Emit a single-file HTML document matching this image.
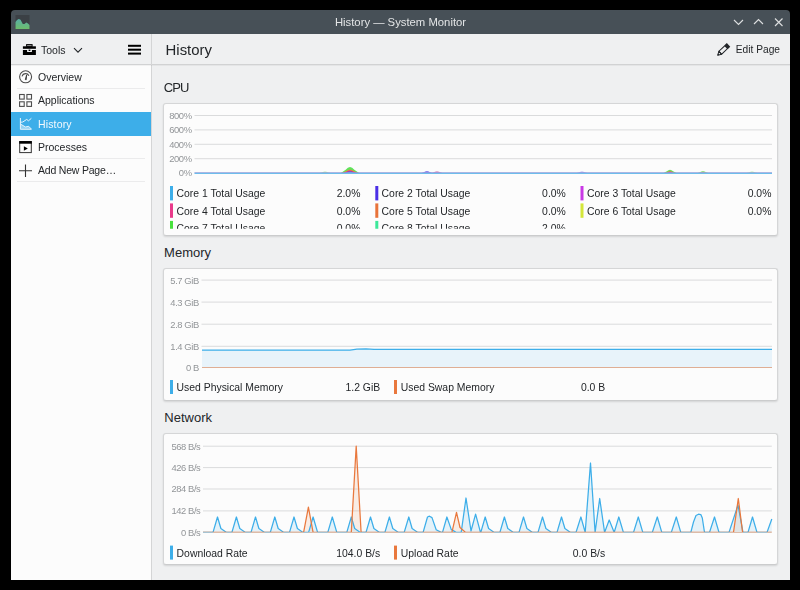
<!DOCTYPE html>
<html><head><meta charset="utf-8">
<style>
*{margin:0;padding:0;box-sizing:border-box}
html,body{width:800px;height:590px;overflow:hidden;background:#000}
body{font-family:"Liberation Sans",sans-serif;color:#232629;position:relative}
.a{position:absolute;white-space:nowrap}
.t{font-size:10.5px;line-height:10.5px}
svg{position:absolute;overflow:visible}
</style></head><body>
<!-- window frame -->
<div class="a" style="left:11px;top:10px;width:779px;height:24px;background:#475057;border-radius:4px 4px 0 0"></div>
<div class="a" style="left:11px;top:34px;width:779px;height:30px;background:#eff0f1"></div>
<div class="a" style="left:11px;top:64px;width:779px;height:1px;background:#d1d2d3"></div>
<div class="a" style="left:11px;top:65px;width:140px;height:515px;background:#fcfcfc"></div>
<div class="a" style="left:152px;top:65px;width:638px;height:515px;background:#eff0f1"></div>
<div class="a" style="left:151px;top:34px;width:1px;height:546px;background:#d4d5d6"></div>
<div class="a" style="left:11px;top:65px;width:779px;height:1px;background:rgba(0,0,0,0.045)"></div>

<!-- title bar -->
<svg style="left:0;top:0" width="800" height="40">
 <rect x="15.5" y="15" width="14" height="14" fill="#3b4045"/>
 <defs><linearGradient id="ig" x1="0" y1="0" x2="0" y2="1"><stop offset="0" stop-color="#58aea6"/><stop offset="1" stop-color="#6cbd6c"/></linearGradient></defs>
 <path d="M15.5 22 L17 20 L18.8 19.1 L20.5 19.8 L22.8 23.9 L24.5 24 L26.2 22.5 L28 23.5 L29.5 24.9 L29.5 29 L15.5 29 Z" fill="url(#ig)"/>
 <g stroke="#dcdedf" stroke-width="1.15" fill="none">
  <path d="M734 20 L738.5 24.5 L743 20"/>
  <path d="M754 24 L758.5 19.5 L763 24"/>
  <path d="M775 18.5 L782.5 26 M782.5 18.5 L775 26"/>
 </g>
</svg>
<div class="a" style="left:11px;width:779px;top:16.5px;text-align:center;font-size:11.3px;line-height:11.3px;color:#e3e5e6;will-change:transform">History — System Monitor</div>

<!-- sidebar header -->
<svg style="left:0;top:0" width="160" height="64">
 <rect x="26.1" y="44.1" width="6.5" height="2.8" fill="#000"/>
 <rect x="27.1" y="45" width="4.5" height="1.2" fill="#888"/>
 <rect x="22.9" y="46.3" width="13" height="2.5" fill="#000"/>
 <rect x="22.9" y="50" width="13" height="5" fill="#000"/>
 <rect x="27.1" y="49" width="4.8" height="3" fill="#eff0f1"/>
 <rect x="28.6" y="49.6" width="1.8" height="1.4" fill="#000"/>
 <path d="M74 48.2 L78 52.2 L82 48.2" stroke="#232629" stroke-width="1.1" fill="none"/>
 <rect x="128" y="44.8" width="13" height="2" fill="#000"/>
 <rect x="128" y="48.7" width="13" height="2" fill="#000"/>
 <rect x="128" y="52.6" width="13" height="2" fill="#000"/>
</svg>
<div class="a t" style="left:41px;top:45.1px">Tools</div>

<!-- content header -->
<div class="a" style="left:165.6px;top:43.3px;font-size:14.9px;line-height:14.9px">History</div>
<svg style="left:0;top:0" width="800" height="64">
 <g transform="translate(717.5 55.4) rotate(-43.5)">
  <path d="M0.3 0 L3.8 -2 L3.8 2 Z" fill="none" stroke="#232629" stroke-width="1" stroke-linejoin="round"/>
  <path d="M0 0 L1.8 -1 L1.8 1 Z" fill="#232629"/>
  <rect x="3.8" y="-2" width="8.2" height="4" fill="none" stroke="#232629" stroke-width="1"/>
  <rect x="12" y="-2.5" width="3.2" height="5" fill="#232629"/>
 </g>
</svg>
<div class="a" style="left:735.8px;top:45.3px;font-size:10.2px;line-height:10.2px">Edit Page</div>

<!-- sidebar items -->
<div class="a" style="left:11px;top:112px;width:140px;height:24px;background:#3daee9"></div>
<div class="a" style="left:17px;top:88px;width:128px;height:1px;background:#ebebec"></div>
<div class="a" style="left:17px;top:158px;width:128px;height:1px;background:#ebebec"></div>
<div class="a" style="left:17px;top:181px;width:128px;height:1px;background:#ebebec"></div>
<svg style="left:0;top:0" width="160" height="190">
 <g fill="none" stroke="#4d4d4d" stroke-width="1.1">
  <circle cx="25.6" cy="76.8" r="6"/>
  <path d="M22 76.3 A3.7 3.7 0 0 1 28.9 75.8"/>
 </g>
 <path d="M25.3 79.6 L26.6 75 L26.2 79.8 Z" fill="#333" stroke="#333" stroke-width="0.8"/>
 <g fill="none" stroke="#4d4d4d" stroke-width="1.1">
  <rect x="19.6" y="94.5" width="4.6" height="4.6"/>
  <rect x="26.9" y="94.5" width="4.6" height="4.6"/>
  <rect x="19.6" y="101.8" width="4.6" height="4.6"/>
  <rect x="26.9" y="101.8" width="4.6" height="4.6"/>
 </g>
 <g fill="none" stroke="#e6f4fc" stroke-width="1">
  <path d="M20.4 118 L20.4 129.3 L31.6 129.3"/>
  <path d="M20.4 122.3 L22.8 122 L26.7 119.4 L28.5 120.8 L31.4 118.3"/>
  <path d="M20.4 124 L25.5 127 L28.7 126.3 L31.3 129"/>
 </g>
 <path d="M20.4 124 L25.5 127 L28.7 126.3 L31.3 129 L20.4 129 Z" fill="#e6f4fc" opacity="0.5"/>
 <rect x="19.7" y="141.6" width="11.6" height="11" fill="none" stroke="#333" stroke-width="1"/>
 <rect x="19.2" y="141.1" width="12.6" height="2.6" fill="#000"/>
 <path d="M23.9 146.2 L27.8 148.45 L23.9 150.7 Z" fill="#000"/>
 <path d="M19 170.8 L32 170.8 M25.5 164.5 L25.5 177" stroke="#333" stroke-width="1.1"/>
</svg>
<div class="a t" style="left:38px;top:72.2px">Overview</div>
<div class="a t" style="left:38px;top:95.1px">Applications</div>
<div class="a t" style="left:38px;top:119.1px;color:#f4f9fd;letter-spacing:0.15px">History</div>
<div class="a t" style="left:38px;top:142px">Processes</div>
<div class="a t" style="left:38px;top:165px;letter-spacing:-0.2px">Add New Page…</div>

<!-- section titles -->
<div class="a" style="left:163.7px;top:81px;font-size:13px;line-height:13px;letter-spacing:-0.9px">CPU</div>
<div class="a" style="left:164.1px;top:245.8px;font-size:13px;line-height:13px">Memory</div>
<div class="a" style="left:164.3px;top:411.2px;font-size:13px;line-height:13px">Network</div>

<!-- cards -->
<div class="a" style="left:163px;top:103px;width:615px;height:133px;background:#fcfcfc;border:1px solid #d5d6d7;border-bottom-color:#cbcccd;border-radius:3px;box-shadow:0 1px 2px rgba(0,0,0,0.12)"></div>
<div class="a" style="left:163px;top:268px;width:615px;height:133px;background:#fcfcfc;border:1px solid #d5d6d7;border-bottom-color:#cbcccd;border-radius:3px;box-shadow:0 1px 2px rgba(0,0,0,0.12)"></div>
<div class="a" style="left:163px;top:433px;width:615px;height:132px;background:#fcfcfc;border:1px solid #d5d6d7;border-bottom-color:#cbcccd;border-radius:3px;box-shadow:0 1px 2px rgba(0,0,0,0.12)"></div>

<svg style="left:0;top:0" width="800" height="590" font-family="Liberation Sans, sans-serif">
 <defs><clipPath id="netclip"><rect x="200" y="440" width="580" height="92"/></clipPath><clipPath id="memclip"><rect x="200" y="270" width="580" height="97.8"/></clipPath><clipPath id="cpuclip"><rect x="165" y="104" width="612" height="124.8"/></clipPath></defs>
 <!-- CPU chart -->
 <g stroke="#dadbdc" stroke-width="1">
  <path d="M194.5 115.5 H772 M194.5 129.9 H772 M194.5 144.3 H772 M194.5 158.7 H772 M194.5 173 H772"/>
 </g>
 <g font-size="9.4" fill="#929598" text-anchor="end" letter-spacing="-0.4">
  <text x="191.6" y="118.8">800%</text>
  <text x="191.6" y="133.2">600%</text>
  <text x="191.6" y="147.6">400%</text>
  <text x="191.6" y="162">200%</text>
  <text x="191.6" y="176.3">0%</text>
 </g>
 <path d="M340.5 173.2 L345.7 169.7 Q350.0 164.1 354.3 169.7 L359.5 173.2 Z" fill="#5ee35a"/>
 <path d="M341.3 173.2 L346.1 171.1 Q350.0 167.7 353.9 171.1 L358.7 173.2 Z" fill="#e88a3c"/>
 <path d="M342.0 173.2 L346.4 171.8 Q350.0 169.4 353.6 171.8 L358.0 173.2 Z" fill="#e0407a"/>
 <path d="M342.8 173.2 L346.8 172.1 Q350.0 170.3 353.2 172.1 L357.2 173.2 Z" fill="#7a3ee6"/>
 <path d="M344.0 173.2 L347.3 172.4 Q350.0 171.0 352.7 172.4 L356.0 173.2 Z" fill="#3da8e9"/>
 <path d="M663.0 173.2 L666.9 171.3 Q670.0 168.3 673.1 171.3 L677.0 173.2 Z" fill="#6ae35a" opacity="1.00"/>
 <path d="M664.0 173.2 L667.3 172.0 Q670.0 170.0 672.7 172.0 L676.0 173.2 Z" fill="#e88a3c" opacity="0.80"/>
 <path d="M665.0 173.2 L667.8 172.3 Q670.0 170.9 672.2 172.3 L675.0 173.2 Z" fill="#c040c0" opacity="0.80"/>
 <path d="M697.0 173.2 L700.3 171.9 Q703.0 169.9 705.7 171.9 L709.0 173.2 Z" fill="#7ae36a" opacity="0.80"/>
 <path d="M698.0 173.2 L700.8 172.4 Q703.0 171.2 705.2 172.4 L708.0 173.2 Z" fill="#e0808a" opacity="0.60"/>
 <path d="M421.0 173.2 L424.3 172.0 Q427.0 170.0 429.7 172.0 L433.0 173.2 Z" fill="#5a4ae6" opacity="0.70"/>
 <path d="M431.0 173.2 L434.3 172.1 Q437.0 170.3 439.7 172.1 L443.0 173.2 Z" fill="#c04aa0" opacity="0.60"/>
 <path d="M319.0 173.2 L322.3 172.3 Q325.0 170.9 327.7 172.3 L331.0 173.2 Z" fill="#8ae07a" opacity="0.60"/>
 <path d="M576.0 173.2 L579.3 172.3 Q582.0 170.7 584.7 172.3 L588.0 173.2 Z" fill="#6a5ae6" opacity="0.50"/>
 <path d="M746.0 173.2 L749.3 172.2 Q752.0 170.6 754.7 172.2 L758.0 173.2 Z" fill="#8ae07a" opacity="0.60"/>
 <path d="M194.5 172.5 H772" stroke="#a890d8" stroke-width="1" opacity="0.6"/>
 <path d="M194.5 173.4 H772" stroke="#6dbcec" stroke-width="1.2"/>
 <g clip-path="url(#cpuclip)">
  <rect x="170" y="186" width="3" height="14.4" fill="#3daee9"/>
  <rect x="170" y="203.4" width="3" height="14.4" fill="#e93a8a"/>
  <rect x="170" y="220.9" width="3" height="14.4" fill="#47e03c"/>
  <rect x="375.3" y="186" width="3" height="14.4" fill="#4b2fe6"/>
  <rect x="375.3" y="203.4" width="3" height="14.4" fill="#e8733a"/>
  <rect x="375.3" y="220.9" width="3" height="14.4" fill="#3de89a"/>
  <rect x="580.5" y="186" width="3" height="14.4" fill="#c93ae6"/>
  <rect x="580.5" y="203.4" width="3" height="14.4" fill="#d4e63a"/>
  <g font-size="10.4" fill="#232629">
   <text x="176.5" y="197.4">Core 1 Total Usage</text>
   <text x="176.5" y="214.9">Core 4 Total Usage</text>
   <text x="176.5" y="232.4">Core 7 Total Usage</text>
   <text x="381.6" y="197.4">Core 2 Total Usage</text>
   <text x="381.6" y="214.9">Core 5 Total Usage</text>
   <text x="381.6" y="232.4">Core 8 Total Usage</text>
   <text x="587" y="197.4">Core 3 Total Usage</text>
   <text x="587" y="214.9">Core 6 Total Usage</text>
  </g>
  <g font-size="10.4" fill="#232629" text-anchor="end">
   <text x="360.4" y="197.4">2.0%</text>
   <text x="360.4" y="214.9">0.0%</text>
   <text x="360.4" y="232.4">0.0%</text>
   <text x="565.8" y="197.4">0.0%</text>
   <text x="565.8" y="214.9">0.0%</text>
   <text x="565.8" y="232.4">2.0%</text>
   <text x="771.4" y="197.4">0.0%</text>
   <text x="771.4" y="214.9">0.0%</text>
  </g>
 </g>

 <!-- Memory chart -->
 <g stroke="#dadbdc" stroke-width="1">
  <path d="M201.5 280.1 H772 M201.5 302.1 H772 M201.5 324.2 H772 M201.5 346.3 H772"/>
 </g>
 <g font-size="9.4" fill="#929598" text-anchor="end" letter-spacing="-0.4">
  <text x="198.8" y="283.5">5.7 GiB</text>
  <text x="198.8" y="305.5">4.3 GiB</text>
  <text x="198.8" y="327.6">2.8 GiB</text>
  <text x="198.8" y="349.7">1.4 GiB</text>
  <text x="198.8" y="370.8">0 B</text>
 </g>
 <path d="M202 350.2 L350 350.2 L357 349.2 L366 348.9 L374 349.3 L772 349.4 L772 367.2 L202 367.2 Z" fill="#e8f3fa"/>
 <path d="M202 367.5 H772" stroke="#dfae94" stroke-width="1"/>
 <path d="M202 350.2 L350 350.2 L357 349.2 L366 348.9 L374 349.3 L772 349.4" stroke="#3daee9" stroke-width="1.2" fill="none"/>
 <rect x="170" y="380" width="3" height="14" fill="#3daee9"/>
 <rect x="394" y="380" width="3" height="14" fill="#e9783d"/>
 <g font-size="10.4" fill="#232629">
  <text x="176.6" y="391.1">Used Physical Memory</text>
  <text x="400.8" y="391.1">Used Swap Memory</text>
  <text x="380.2" y="391.1" text-anchor="end">1.2 GiB</text>
  <text x="605.2" y="391.1" text-anchor="end">0.0 B</text>
 </g>

 <!-- Network chart -->
 <g stroke="#dadbdc" stroke-width="1">
  <path d="M203 446.2 H771.8 M203 467.6 H771.8 M203 489 H771.8 M203 510.9 H771.8"/>
 </g>
 <g font-size="9.4" fill="#929598" text-anchor="end" letter-spacing="-0.4">
  <text x="200.4" y="449.6">568 B/s</text>
  <text x="200.4" y="471">426 B/s</text>
  <text x="200.4" y="492.4">284 B/s</text>
  <text x="200.4" y="514.1">142 B/s</text>
  <text x="200.4" y="535.8">0 B/s</text>
 </g>
 <g clip-path="url(#netclip)">
 <path d="M203.0 532.4 L303.6 532.4 L308.4 507.2 L313.1 532.4 L351.3 532.4 L356.2 446.1 L361.1 532.4 L451.9 532.4 L456.5 512.3 L460.0 527.5 L465.6 532.4 L733.5 532.4 L738.3 498.5 L742.6 532.4 L771.8 532.4 Z" fill="#e9783d" fill-opacity="0.12"/>
 <path d="M203.0 532.4 L213.0 532.4 L217.5 517.0 L220.9 528.5 L226.5 532.4 L231.9 532.4 L236.4 517.0 L239.8 528.5 L245.4 532.4 L251.0 532.4 L255.5 517.0 L258.9 528.5 L264.5 532.4 L270.3 532.4 L274.8 517.0 L278.2 528.5 L283.8 532.4 L289.5 532.4 L294.0 517.0 L297.4 528.5 L303.0 532.4 L308.6 532.4 L313.1 517.0 L317.6 532.4 L327.8 532.4 L332.3 517.0 L336.8 532.4 L346.8 532.4 L351.3 517.0 L354.7 528.5 L360.3 532.4 L366.0 532.4 L370.5 517.0 L373.9 528.5 L379.5 532.4 L384.9 532.4 L389.4 517.0 L392.8 528.5 L398.4 532.4 L404.2 532.4 L408.8 517.0 L412.1 528.5 L417.8 532.4 L423.1 532.4 L427.5 517.0 L429.5 516.2 L432.0 517.6 L436.2 529.7 L441.2 532.4 L442.5 532.4 L446.9 517.0 L451.2 529.4 L456.0 532.4 L461.2 532.4 L466.0 498.0 L471.0 531.0 L475.6 514.2 L480.5 532.4 L480.8 532.4 L480.8 532.4 L485.2 517.0 L488.6 528.5 L494.2 532.4 L499.9 532.4 L504.4 517.0 L507.8 528.5 L513.4 532.4 L519.0 532.4 L523.5 517.0 L526.9 528.5 L532.5 532.4 L538.0 532.4 L542.5 517.0 L545.9 528.5 L551.5 532.4 L557.0 532.4 L561.5 517.0 L564.9 528.5 L570.5 532.4 L576.0 532.4 L580.9 517.0 L585.2 532.4 L590.5 463.0 L595.1 532.4 L599.7 498.5 L604.6 532.4 L609.2 520.0 L614.2 532.4 L618.8 517.0 L623.4 532.4 L633.5 532.4 L638.3 517.0 L642.8 532.4 L652.3 532.4 L657.3 517.0 L661.8 532.4 L671.3 532.4 L676.3 517.0 L680.8 532.4 L690.8 532.4 L693.5 522.0 L696.0 515.5 L698.5 514.2 L700.8 514.6 L702.3 518.0 L704.5 532.4 L709.5 532.4 L714.5 517.0 L719.0 532.4 L729.0 532.4 L738.0 505.0 L743.0 532.4 L748.0 532.4 L752.5 517.0 L757.0 532.4 L767.0 532.4 L771.8 519.0 L771.8 532.4 Z" fill="#3daee9" fill-opacity="0.12"/>
 <path d="M203.0 532.4 L213.0 532.4 L217.5 517.0 L220.9 528.5 L226.5 532.4 L231.9 532.4 L236.4 517.0 L239.8 528.5 L245.4 532.4 L251.0 532.4 L255.5 517.0 L258.9 528.5 L264.5 532.4 L270.3 532.4 L274.8 517.0 L278.2 528.5 L283.8 532.4 L289.5 532.4 L294.0 517.0 L297.4 528.5 L303.0 532.4 L308.6 532.4 L313.1 517.0 L317.6 532.4 L327.8 532.4 L332.3 517.0 L336.8 532.4 L346.8 532.4 L351.3 517.0 L354.7 528.5 L360.3 532.4 L366.0 532.4 L370.5 517.0 L373.9 528.5 L379.5 532.4 L384.9 532.4 L389.4 517.0 L392.8 528.5 L398.4 532.4 L404.2 532.4 L408.8 517.0 L412.1 528.5 L417.8 532.4 L423.1 532.4 L427.5 517.0 L429.5 516.2 L432.0 517.6 L436.2 529.7 L441.2 532.4 L442.5 532.4 L446.9 517.0 L451.2 529.4 L456.0 532.4 L461.2 532.4 L466.0 498.0 L471.0 531.0 L475.6 514.2 L480.5 532.4 L480.8 532.4 L480.8 532.4 L485.2 517.0 L488.6 528.5 L494.2 532.4 L499.9 532.4 L504.4 517.0 L507.8 528.5 L513.4 532.4 L519.0 532.4 L523.5 517.0 L526.9 528.5 L532.5 532.4 L538.0 532.4 L542.5 517.0 L545.9 528.5 L551.5 532.4 L557.0 532.4 L561.5 517.0 L564.9 528.5 L570.5 532.4 L576.0 532.4 L580.9 517.0 L585.2 532.4 L590.5 463.0 L595.1 532.4 L599.7 498.5 L604.6 532.4 L609.2 520.0 L614.2 532.4 L618.8 517.0 L623.4 532.4 L633.5 532.4 L638.3 517.0 L642.8 532.4 L652.3 532.4 L657.3 517.0 L661.8 532.4 L671.3 532.4 L676.3 517.0 L680.8 532.4 L690.8 532.4 L693.5 522.0 L696.0 515.5 L698.5 514.2 L700.8 514.6 L702.3 518.0 L704.5 532.4 L709.5 532.4 L714.5 517.0 L719.0 532.4 L729.0 532.4 L738.0 505.0 L743.0 532.4 L748.0 532.4 L752.5 517.0 L757.0 532.4 L767.0 532.4 L771.8 519.0" stroke="#3daee9" stroke-width="1.25" fill="none" stroke-linejoin="round"/>
 <path d="M203.0 532.4 L303.6 532.4 L308.4 507.2 L313.1 532.4 L351.3 532.4 L356.2 446.1 L361.1 532.4 L451.9 532.4 L456.5 512.3 L460.0 527.5 L465.6 532.4 L733.5 532.4 L738.3 498.5 L742.6 532.4 L771.8 532.4" stroke="#e9783d" stroke-width="1.25" fill="none" stroke-linejoin="round"/>
 </g>
 <path d="M203 532.5 H771.8" stroke="#dcbba8" stroke-width="1"/>
 <path d="M203.0 532.5 H213.0 M226.5 532.5 H231.9 M245.4 532.5 H251.0 M264.5 532.5 H270.3 M283.8 532.5 H289.5 M303.0 532.5 H308.6 M317.6 532.5 H327.8 M336.8 532.5 H346.8 M360.3 532.5 H366.0 M379.5 532.5 H384.9 M398.4 532.5 H404.2 M417.8 532.5 H423.1 M441.2 532.5 H442.5 M456.0 532.5 H461.2 M480.5 532.5 H480.8 M494.2 532.5 H499.9 M513.4 532.5 H519.0 M532.5 532.5 H538.0 M551.5 532.5 H557.0 M570.5 532.5 H576.0 M623.4 532.5 H633.5 M642.8 532.5 H652.3 M661.8 532.5 H671.3 M680.8 532.5 H690.8 M704.5 532.5 H709.5 M719.0 532.5 H729.0 M743.0 532.5 H748.0 M757.0 532.5 H767.0" stroke="#a6c3d2" stroke-width="1"/>
 <rect x="170" y="545.6" width="3" height="14" fill="#3daee9"/>
 <rect x="394" y="545.6" width="3" height="14" fill="#e9783d"/>
 <g font-size="10.4" fill="#232629">
  <text x="176.6" y="556.7">Download Rate</text>
  <text x="400.8" y="556.7">Upload Rate</text>
  <text x="380.2" y="556.7" text-anchor="end">104.0 B/s</text>
  <text x="605.2" y="556.7" text-anchor="end">0.0 B/s</text>
 </g>
</svg>
</body></html>
